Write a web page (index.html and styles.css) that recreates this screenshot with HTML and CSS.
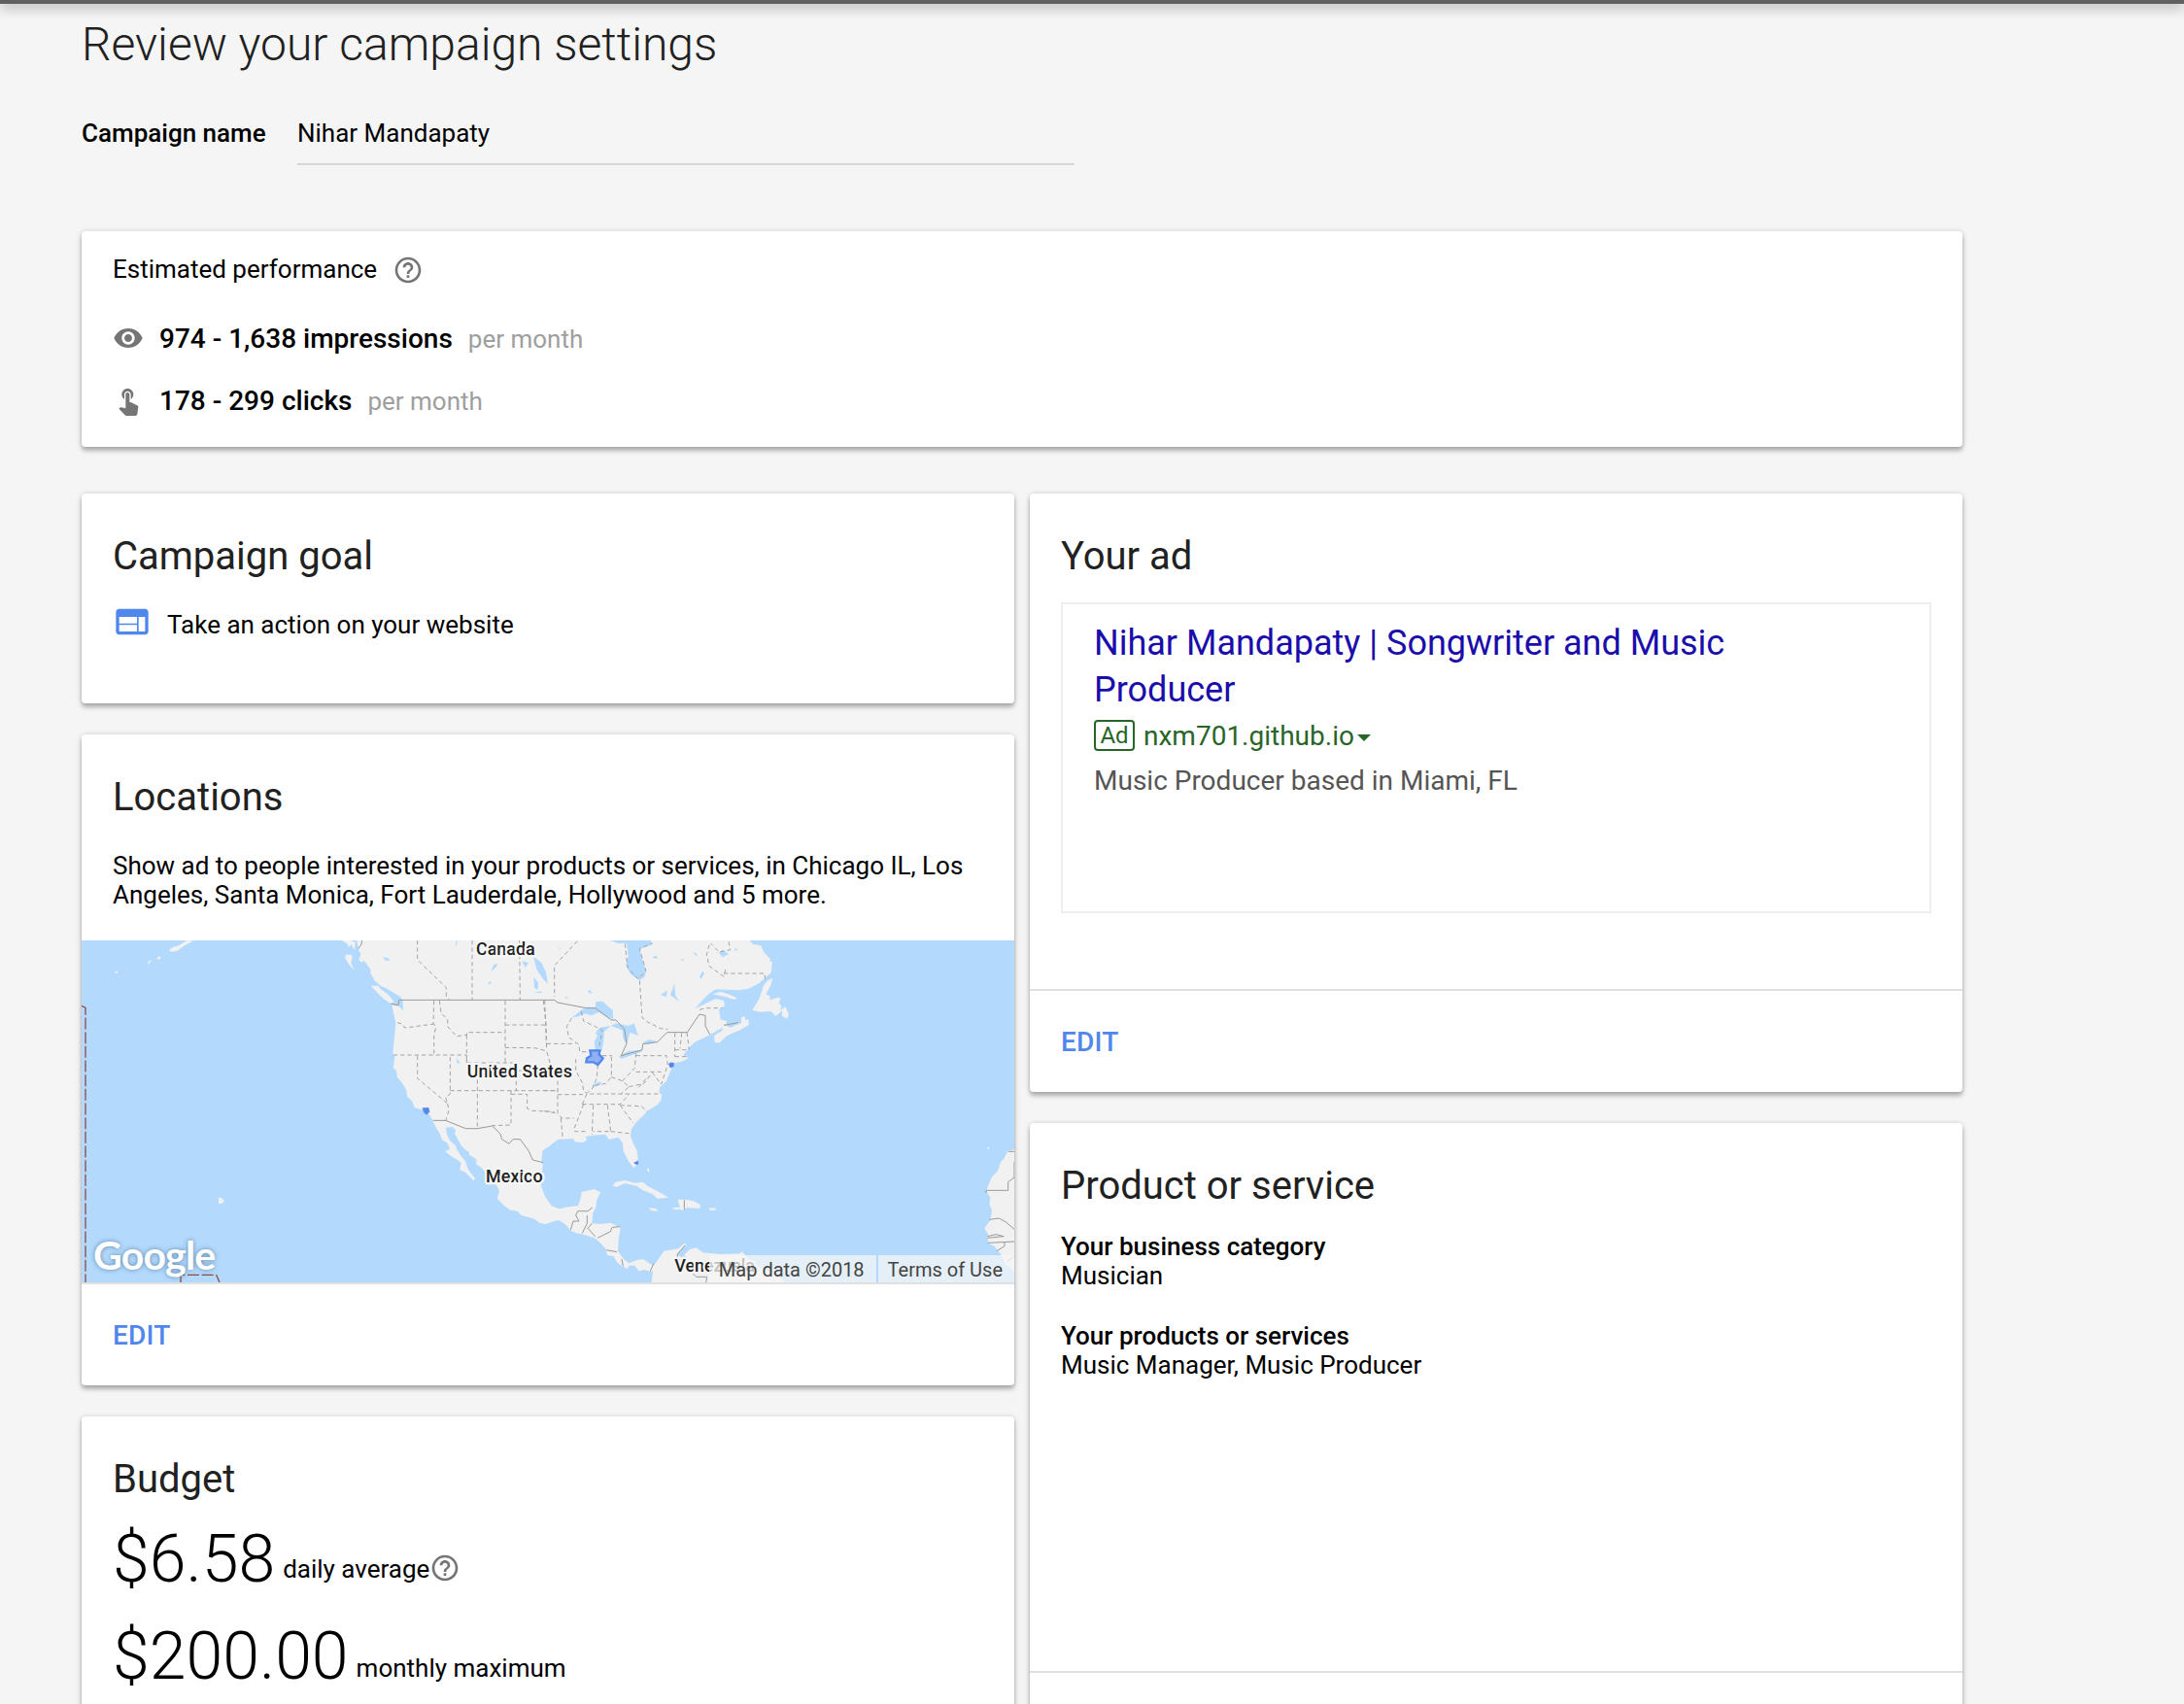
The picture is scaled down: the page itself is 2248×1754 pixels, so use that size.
FILE: index.html
```html
<!DOCTYPE html>
<html lang="en">
<head>
<meta charset="utf-8">
<title>Review your campaign settings</title>
<link rel="stylesheet" href="styles.css">
</head>
<body>
<div class="topbar"></div>
<main class="page">
  <h1 class="title">Review your campaign settings</h1>
  <div class="name-row">
    <span class="name-label">Campaign name</span>
    <span class="name-field">Nihar Mandapaty</span>
  </div>

  <section class="card performance">
    <div class="perf-head">Estimated performance
      <svg class="icon" viewBox="0 0 24 24"><path d="M11 18h2v-2h-2v2zm1-16C6.48 2 2 6.48 2 12s4.48 10 10 10 10-4.48 10-10S17.52 2 12 2zm0 18c-4.41 0-8-3.59-8-8s3.59-8 8-8 8 3.59 8 8-3.59 8-8 8zm0-14c-2.21 0-4 1.79-4 4h2c0-1.1.9-2 2-2s2 .9 2 2c0 2-3 1.750-3 5h2c0-2.250 3-2.500 3-5 0-2.210-1.790-4-4-4z"/></svg>
    </div>
    <div class="metric">
      <svg class="icon" viewBox="0 0 24 24"><path d="M12 4.500C7 4.500 2.730 7.610 1 12c1.730 4.390 6 7.500 11 7.500s9.270-3.110 11-7.500c-1.730-4.390-6-7.500-11-7.500zM12 17c-2.760 0-5-2.240-5-5s2.240-5 5-5 5 2.240 5 5-2.240 5-5 5zm0-8c-1.660 0-3 1.340-3 3s1.340 3 3 3 3-1.340 3-3-1.340-3-3-3z"/></svg>
      <strong class="metric-value">974 - 1,638 impressions</strong><span class="metric-unit">per month</span>
    </div>
    <div class="metric">
      <svg class="icon" viewBox="0 0 24 24"><path d="M9 11.240V7.500C9 6.120 10.120 5 11.500 5S14 6.120 14 7.500v3.740c1.210-.810 2-2.180 2-3.740C16 5.010 13.990 3 11.500 3S7 5.010 7 7.500c0 1.560.790 2.930 2 3.740zm9.840 4.630l-4.540-2.260c-.170-.070-.350-.110-.540-.110H13v-6c0-.830-.670-1.500-1.500-1.500S10 6.670 10 7.500v10.740l-3.430-.720c-.080-.010-.150-.030-.240-.030-.310 0-.590.130-.790.330l-.790.800 4.940 4.940c.270.270.650.440 1.060.440h6.790c.750 0 1.330-.550 1.440-1.280l.750-5.270c.010-.070.020-.140.020-.200 0-.620-.380-1.160-.910-1.380z"/></svg>
      <strong class="metric-value">178 - 299 clicks</strong><span class="metric-unit">per month</span>
    </div>
  </section>

  <div class="columns">
    <div class="column">
      <section class="card goal">
        <h2 class="heading">Campaign goal</h2>
        <div class="goal-row">
          <svg class="web-icon" viewBox="0 0 24 24"><path d="M20 4H4c-1.100 0-1.990.900-1.990 2L2 18c0 1.100.900 2 2 2h16c1.100 0 2-.900 2-2V6c0-1.100-.900-2-2-2zm-5 14H4v-4h11v4zm0-5H4V9h11v4zm5 5h-4V9h4v9z"/></svg>
          <span>Take an action on your website</span>
        </div>
      </section>

      <section class="card locations">
        <h2 class="heading">Locations</h2>
        <p class="copy">Show ad to people interested in your products or services, in Chicago IL, Los<br>Angeles, Santa Monica, Fort Lauderdale, Hollywood and 5 more.</p>
        <div class="map">
          <svg class="map-canvas" viewBox="0 6 2880 1056">
            <g class="land">
              <path d="M850 6L855 35 862 48 856 66 865 74 872 68 892 95 892 108 905 130 925 148 945 155 960 178 980 190 990 205 993 223 984 208 978 209 958 203 962 225 970 260 961 355 967 365 962 400 972 408 975 430 985 440 997 458 1003 470 1005 488 1020 502 1028 522 1055 530 1075 545 1085 565 1095 585 1105 600 1112 620 1130 632 1137 650 1122 658 1145 675 1157 682 1172 692 1168 715 1185 722 1210 748 1215 740 1200 722 1193 712 1185 688 1170 670 1158 650 1155 640 1138 625 1128 605 1124 584 1145 582 1155 592 1152 602 1172 640 1188 655 1197 660 1197 668 1219 682 1219 697 1235 708 1250 725 1283 765 1290 780 1283 803 1305 825 1322 838 1345 842 1358 855 1395 865 1415 878 1432 882 1462 872 1490 860 1475 835 1450 825 1430 795 1418 760 1424 700 1420 690 1423 655 1450 638 1450 6Z"/>
              <path d="M893 146L916 146 922 155 945 172 965 195 955 201 935 188 920 175ZM815 50L832 50 836 58 832 75 842 99 826 80 814 62ZM803 6L832 6 845 12 843 36 832 18 825 27 818 14Z"/>
              <path d="M270 36L282 26 300 22 315 12 325 6 345 8 318 22 295 38 276 41ZM232 66L238 54 246 61ZM202 83L207 70 218 67ZM99 105L110 100 112 107ZM423 800L433 802 441 812 430 819 423 818Z"/>
              <g transform="translate(1428)">
                <path d="M-40 6L205 6 230 16 255 14 260 55 253 82 265 107 280 120 296 128 311 118 315 100 305 70 295 32 332 20 330 6 635 6 645 18 670 22 678 42 698 62 697 70 704 72 702 105 665 137 632 155 600 160 530 157 510 170 490 190 466 217 500 200 530 186 555 192 558 207 540 220 545 250 565 256 560 270 512 298 465 320 450 335 430 360 446 370 425 380 402 385 388 415 378 440 358 458 355 475 364 482 361 500 350 514 320 532 308 545 285 567 270 588 267 610 275 632 287 655 290 680 286 700 277 708 262 690 245 657 243 632 230 614 200 620 190 605 150 608 128 612 132 622 120 631 95 628 90 618 60 620 45 620 20 637 -5 655 -40 670Z"/>
                <path d="M-20 875L2 880 33 868 50 872 68 885 82 902 100 910 125 915 158 926 178 945 190 958 195 978 215 982 225 1000 240 1012 258 1020 262 1010 280 1010 293 1027 310 1023 332 1030 345 1015 325 1003 307 991 290 992 262 1003 244 988 228 965 230 930 236 892 225 887 205 878 175 882 148 880 150 850 160 830 162 810 174 784 155 774 116 783 112 805 105 825 65 830 40 838 22 825 0 800Z"/>
                <path d="M525 300L550 285 552 265 575 275 610 260 608 245 620 240 622 252 632 250 632 268 600 285 565 300 540 323 527 320ZM643 222L665 185 678 145 690 130 706 123 700 145 685 172 697 178 698 190 720 182 730 183 725 200 733 208 730 222 745 210 755 232 752 248 735 240 735 223 715 240 700 225 670 227ZM520 172L545 165 570 172 598 185 585 188 560 180ZM518 205L545 206 556 210 540 218Z"/>
                <path d="M212 765L220 752 250 747 280 755 305 752 320 765 345 778 385 800 350 803 333 788 305 778 288 765 250 756 225 767ZM395 836L402 831 420 830 413 806 445 808 465 812 482 822 482 833 440 832 430 840 420 836ZM322 832L345 834 353 842 332 841ZM510 832L530 833 530 839 512 839ZM317 712L323 710 326 722 321 720Z"/>
                <path d="M332 1062L338 1010 350 995 370 965 415 958 435 940 438 948 410 975 425 985 450 960 470 955 490 970 545 975 605 973 612 967 640 1000 680 1022 720 1038 745 1062Z"/>
              </g>
              <path transform="translate(2148)" d="M732 652L712 656 700 680 690 690 682 716 662 738 645 780 658 800 655 820 663 840 658 870 640 895 652 915 650 940 670 950 690 975 705 1005 732 1030ZM648 645L656 645 653 653Z"/>
            </g>
            <g class="water">
              <path d="M948 158L985 180 992 196 992 222 978 207 978 192 958 180ZM930 58L945 60 954 68 938 68ZM1153 25L1158 6 1161 8 1158 20ZM1265 102L1272 82 1286 77 1280 88ZM1252 142L1262 131 1266 138ZM1157 368L1169 385 1160 386ZM1395 55L1420 75 1434 105 1440 140 1425 125 1405 95ZM1396 120L1410 135 1409 158 1398 153ZM1360 70L1380 75 1370 90ZM1392 168L1420 163 1420 168Z"/>
              <g transform="translate(1428)">
                <path d="M85 246L110 225 130 212 158 212 160 195 180 194 212 222 214 250 190 240 170 228 145 238 125 232 108 240ZM158 345L155 320 165 300 158 292 172 275 206 270 185 288 184 315 178 348 168 352ZM206 270L222 262 260 270 278 262 291 300 265 290 256 325 245 312 242 285 230 278ZM230 365L260 348 305 344 300 350 265 362 240 371ZM303 322L325 312 350 318 382 286 350 318 325 326Z"/>
                <path d="M360 175L380 160 378 180ZM390 175L403 138 405 175 418 195ZM333 60L345 52 352 62ZM458 42L470 46 475 58ZM420 65L433 64 430 70ZM480 118L490 100 495 108 485 125ZM540 45L552 35 570 48 552 58ZM135 165L142 157 148 172ZM0 100L8 125 3 132ZM428 975L440 985 428 988ZM588 30L600 35 590 38ZM65 178L76 183 68 186ZM46 27L52 31 47 34ZM148 452L172 442 178 450 150 460Z"/>
              </g>
            </g>
            <g class="state">
              <path d="M1037 6V66L1126 152V180L1136 190M1206 6V190M1352 6L1354 190M1088 192L1086 262 1094 274 1088 300V360M975 260L990 264 998 276 1088 264M1105 192L1110 230 1130 250 1130 272 1158 302 1189 298V290H1308M962 360H1189V384M1189 298V384H1340V408M1308 192V384M1308 267H1436M1426 192L1434 265 1436 345M1308 337L1400 338 1436 348 1448 390M1037 362V432L1130 510 1124 490 1138 480V362M1138 470H1470M1222 436V587M1342 440V470M1326 470V576L1268 578M1326 481H1376V525L1390 532 1460 535M1130 510L1134 530 1124 564M1350 408H1452"/>
              <g transform="translate(1428)">
                <path d="M103 8L32 84V180M2 190L8 340M8 325H98M115 225L122 255 158 272 180 284 170 335M85 246L70 272 76 305 108 328 110 350H130M98 372L98 408 118 445 122 470 132 478M166 390L163 430 150 462 132 478M0 470H42M42 440V540L55 555H92M42 482H120M118 512L132 480H362M118 512H235L262 482M0 533L42 540M122 512L92 590 95 596H132M52 555L58 620M152 515L148 605M196 515L206 596H152M206 596L262 602M235 515L275 570M235 515L300 518 320 535M180 362H210M208 365V428L190 448 152 455M208 428L242 440 262 458 238 480M242 440L280 400 284 350M284 362H378L382 390 362 450M284 412H362M262 458L308 448 335 415 362 450M292 460L322 425M404 292V365M404 344H448M441 290L448 342M425 292L420 340M404 365H440"/>
                <path d="M295 130L303 245 320 258 360 278 382 280M250 16L258 90 290 125 315 100 295 32 335 14M510 20L502 50 510 85 555 118 562 88M555 108H682V125M570 10L575 35 540 42 515 15M480 220L500 215H550"/>
              </g>
            </g>
            <g class="border">
              <path d="M866 6L864 18 854 32M955 202L978 206 980 190H1460M1085 562H1124L1186 587H1222L1268 579 1292 602 1298 620 1320 634 1332 620H1354L1380 655 1393 684 1425 692"/>
              <g transform="translate(1428)">
                <path d="M32 190L42 198 130 215H158L208 252 222 252 248 280 255 325 238 362 303 344 305 326 350 320 380 290H442L480 234 498 238V270L512 297M150 830L135 842H104L98 855 108 873H90L82 900M133 855V880L118 910M148 880L135 895 158 920M165 925L205 905 210 892 235 890M192 962L225 968M240 990L244 1012M338 1004L328 1028M435 948L412 975V985L445 1020 470 1045H503L500 1062M433 808V838M555 268L600 260"/>
              </g>
              <path transform="translate(2148)" d="M714 658H732M645 786V778H713V752L732 738V690M655 868L685 864 705 875 732 898M650 920L675 914 700 920 650 925M650 940L732 936M678 965L702 950V936M710 998L732 982"/>
            </g>
            <path class="dateline" d="M0 208L12 214V1062M306 1062V1039H416L426 1062"/>
            <g class="target" transform="translate(1428)">
              <path d="M142 346H172L170 358 182 370 176 378 166 390 152 382H130L132 370 145 362Z"/>
            </g>
            <g class="target-dot">
              <path d="M1053 524L1071 523 1074 535 1066 544 1058 538Z"/>
              <path transform="translate(1428)" d="M388 384H400V395L390 399 386 390ZM278 692L290 688V697L282 697Z"/>
            </g>
            <g class="labels">
              <text x="1218" y="51" textLength="182">Canada</text>
              <text x="1190" y="429" textLength="325">United States</text>
              <text x="1248" y="752" textLength="176">Mexico</text>
              <text x="1831" y="1030" textLength="248">Venezuela</text>
            </g>
          </svg>
          <span class="map-logo">Google</span>
          <div class="map-legal"><span class="legal-item">Map data ©2018</span><span class="legal-item">Terms of Use</span></div>
        </div>
        <footer class="card-footer"><a class="edit">EDIT</a></footer>
      </section>

      <section class="card budget">
        <h2 class="heading">Budget</h2>
        <div class="amount-row">
          <span class="amount">$6.58</span><span class="period">daily average</span>
          <svg class="icon" viewBox="0 0 24 24"><path d="M11 18h2v-2h-2v2zm1-16C6.48 2 2 6.48 2 12s4.48 10 10 10 10-4.48 10-10S17.52 2 12 2zm0 18c-4.41 0-8-3.59-8-8s3.59-8 8-8 8 3.59 8 8-3.59 8-8 8zm0-14c-2.21 0-4 1.79-4 4h2c0-1.1.9-2 2-2s2 .9 2 2c0 2-3 1.750-3 5h2c0-2.250 3-2.500 3-5 0-2.210-1.790-4-4-4z"/></svg>
        </div>
        <div class="amount-row">
          <span class="amount">$200.00</span><span class="period period-max">monthly maximum</span>
        </div>
      </section>
    </div>

    <div class="column">
      <section class="card your-ad">
        <h2 class="heading">Your ad</h2>
        <div class="ad-preview">
          <div class="ad-title">Nihar Mandapaty | Songwriter and Music<br>Producer</div>
          <div class="ad-url"><span class="ad-badge">Ad</span><span class="ad-host">nxm701.github.io</span><i class="caret"></i></div>
          <div class="ad-desc">Music Producer based in Miami, FL</div>
        </div>
        <footer class="card-footer"><a class="edit">EDIT</a></footer>
      </section>

      <section class="card product">
        <h2 class="heading">Product or service</h2>
        <dl class="facts">
          <dt>Your business category</dt>
          <dd>Musician</dd>
          <dt>Your products or services</dt>
          <dd>Music Manager, Music Producer</dd>
        </dl>
        <footer class="card-footer"></footer>
      </section>
    </div>
  </div>
</main>
</body>
</html>
```
FILE: styles.css
```css
* { box-sizing: border-box; }
html { overflow: hidden; height: 100%; }
body {
  margin: 0;
  height: 1754px;
  overflow: hidden;
  background: #f5f5f5;
  color: #000;
  font: 26px/30px Roboto, sans-serif;
}
.topbar {
  height: 4px;
  background: #616161;
  box-shadow: 0 2px 14px rgba(0, 0, 0, .6);
}
.page { width: 1936px; margin-left: 84px; padding-top: 14px; }
.title { margin: 0; font-size: 48px; line-height: 56px; font-weight: 300; color: #212121; }
.name-row { display: flex; margin-top: 48px; height: 48px; }
.name-label { width: 222px; font-weight: 500; }
.name-field { width: 800px; border-bottom: 2px solid #d6d6d6; }

.card {
  display: flex;
  flex-direction: column;
  background: #fff;
  border-radius: 4px;
  box-shadow: 0 4px 4px rgba(0, 0, 0, .24), 0 0 4px rgba(0, 0, 0, .12), 0 2px 10px rgba(0, 0, 0, .08);
}
.icon { width: 32px; height: 32px; fill: #757575; flex: none; }

.performance { margin-top: 68px; height: 222px; padding: 24px 32px 31px; }
.perf-head { display: flex; align-items: center; gap: 16px; height: 30px; margin-bottom: 40px; }
.perf-head .icon { margin-top: 2px; }
.metric { display: flex; align-items: center; height: 32px; margin-bottom: 32px; line-height: 32px; }
.metric-value { margin: 2px 0 0 16px; font-size: 28px; font-weight: 500; }
.metric-unit { margin: 2px 0 0 16px; color: #9e9e9e; }

.columns { display: flex; gap: 16px; margin-top: 48px; }
.column { width: 960px; display: flex; flex-direction: column; gap: 32px; }
.heading { margin: 41px 32px -1px; font-size: 40px; line-height: 48px; font-weight: 400; color: #212121; }
.goal { height: 216px; }
.goal-row { display: flex; align-items: center; gap: 16px; height: 30px; margin: 32px 32px 0; }
.web-icon { width: 40px; height: 40px; fill: #4f87ed; flex: none; margin-top: -6px; }
.copy { margin: 32px 32px; }

.card-footer {
  display: flex;
  align-items: center;
  height: 106px;
  margin-top: auto;
  padding: 2px 32px 0;
  border-top: 2px solid #e0e0e0;
  flex: none;
}
.edit { font-size: 28px; line-height: 32px; font-weight: 500; color: #4f87ed; letter-spacing: .2px; }

.map { position: relative; height: 352px; overflow: hidden; background: #b3dafc; }
.map-canvas { display: block; width: 960px; height: 352px; }
.land { fill: #f1f1f1; }
.water { fill: #b3dafc; }
.state { fill: none; stroke: #a3a3a3; stroke-width: 3; stroke-dasharray: 13 9; }
.border { fill: none; stroke: #999; stroke-width: 3; }
.dateline { fill: none; stroke: #8c4a4a; stroke-width: 4; stroke-dasharray: 36 8; }
.target { fill: #8fb0f2; stroke: #5487ec; stroke-width: 7; }
.target-dot { fill: #5487ec; stroke: #5487ec; stroke-width: 2; }
.labels { font-size: 54px; font-weight: 500; fill: #222; stroke: #f6f6f6; stroke-width: 14px; stroke-linejoin: round; paint-order: stroke; }
.map-logo {
  position: absolute;
  left: 12px;
  bottom: 6px;
  font: 700 41px/44px Lato, sans-serif;
  letter-spacing: -.8px;
  color: #fff;
  text-shadow: 0 0 5px rgba(60, 100, 140, .7);
}
.map-legal { position: absolute; right: 0; bottom: 0; display: flex; gap: 2px; font-size: 20px; line-height: 28px; color: #444; }
.legal-item { padding: 2px 12px 0 10px; height: 28px; line-height: 26px; background: rgba(245, 245, 245, .75); }

.budget { height: 500px; }
.amount-row { display: flex; align-items: flex-end; height: 80px; margin: 19px 32px 1px; }
.amount { font-size: 68px; line-height: 80px; font-weight: 300; }
.period { margin-left: 8px; padding-bottom: 15px; }
.period-max { padding-bottom: 13px; }
.amount-row .icon { margin-bottom: 15px; }

.your-ad { height: 616px; }
.ad-preview { margin: 24px 32px 0; height: 320px; padding: 16px 32px; border: 2px solid #eee; }
.ad-title { font-size: 36px; line-height: 48px; color: #1a0dab; }
.ad-url { display: flex; align-items: center; margin-top: 6px; font-size: 28px; line-height: 32px; color: #296529; }
.ad-badge { width: 42px; height: 32px; margin-right: 9px; border: 2px solid #296529; border-radius: 4px; font-size: 24px; line-height: 28px; text-align: center; }
.ad-host { margin-top: 2px; }
.caret { margin: 5px 0 0 3px; border: 7px solid transparent; border-top-color: #296529; border-bottom: 0; }
.ad-desc { margin-top: 14px; font-size: 28px; line-height: 32px; color: #555; }
.product { height: 670px; }
.facts { margin: 24px 32px 0; }
.facts dt { font-weight: 500; }
.facts dd { margin: 0 0 32px; }
```
